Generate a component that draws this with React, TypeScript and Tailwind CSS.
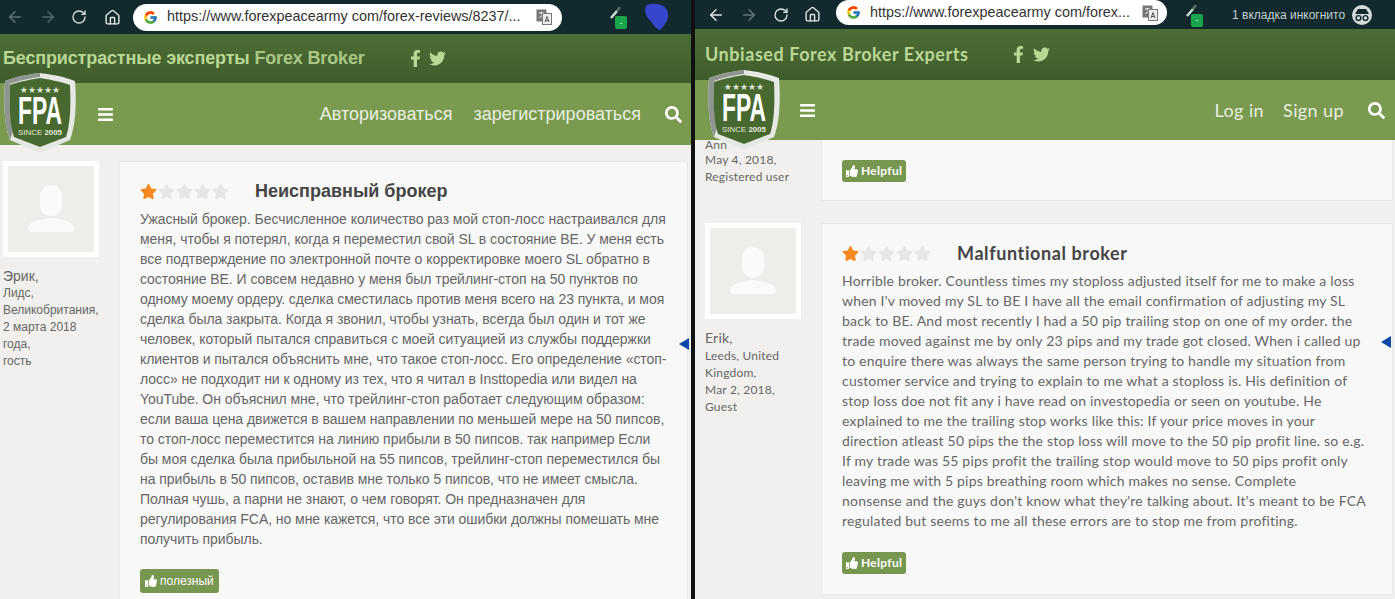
import React from 'react';
import { ArrowLeft, ArrowRight, RotateCw, Home } from 'lucide-react';
import { FaBars, FaFacebookF, FaSearch, FaStar, FaThumbsUp, FaTwitter } from 'react-icons/fa';
import { FcGoogle } from 'react-icons/fc';

const ruLines = [
  'Ужасный брокер. Бесчисленное количество раз мой стоп-лосс настраивался для',
  'меня, чтобы я потерял, когда я переместил свой SL в состояние BE. У меня есть',
  'все подтверждение по электронной почте о корректировке моего SL обратно в',
  'состояние BE. И совсем недавно у меня был трейлинг-стоп на 50 пунктов по',
  'одному моему ордеру. сделка сместилась против меня всего на 23 пункта, и моя',
  'сделка была закрыта. Когда я звонил, чтобы узнать, всегда был один и тот же',
  'человек, который пытался справиться с моей ситуацией из службы поддержки',
  'клиентов и пытался объяснить мне, что такое стоп-лосс. Его определение «стоп-',
  'лосс» не подходит ни к одному из тех, что я читал в Insttopedia или видел на',
  'YouTube. Он объяснил мне, что трейлинг-стоп работает следующим образом:',
  'если ваша цена движется в вашем направлении по меньшей мере на 50 пипсов,',
  'то стоп-лосс переместится на линию прибыли в 50 пипсов. так например Если',
  'бы моя сделка была прибыльной на 55 пипсов, трейлинг-стоп переместился бы',
  'на прибыль в 50 пипсов, оставив мне только 5 пипсов, что не имеет смысла.',
  'Полная чушь, а парни не знают, о чем говорят. Он предназначен для',
  'регулирования FCA, но мне кажется, что все эти ошибки должны помешать мне',
  'получить прибыль.',
];

const enLines = [
  'Horrible broker. Countless times my stoploss adjusted itself for me to make a loss',
  "when I'v moved my SL to BE I have all the email confirmation of adjusting my SL",
  'back to BE. And most recently I had a 50 pip trailing stop on one of my order. the',
  'trade moved against me by only 23 pips and my trade got closed. When i called up',
  'to enquire there was always the same person trying to handle my situation from',
  'customer service and trying to explain to me what a stoploss is. His definition of',
  'stop loss doe not fit any i have read on investopedia or seen on youtube. He',
  'explained to me the trailing stop works like this: If your price moves in your',
  'direction atleast 50 pips the the stop loss will move to the 50 pip profit line. so e.g.',
  'If my trade was 55 pips profit the trailing stop would move to 50 pips profit only',
  'leaving me with 5 pips breathing room which makes no sense. Complete',
  "nonsense and the guys don't know what they're talking about. It's meant to be FCA",
  'regulated but seems to me all these errors are to stop me from profiting.',
];

const Logo = () => (
  <svg viewBox="0 0 74 80" className="w-[74px] h-[80px]">
    <path d="M2 8 C18 2 30 1 37 0 C44 1 56 2 72 8 C74 34 72 54 67 67 L37 80 L7 67 C2 54 0 34 2 8Z" fill="#e6e8e4" />
    <path d="M2 8 C18 2 30 1 37 0 L37 4 C28 5 18 7 7 11 C6 30 7 46 10 58 L7 67 C2 54 0 34 2 8Z" fill="#8f9690" />
    <path d="M7 12 C19 8 30 6 37 5 C44 6 55 8 67 12 C68 35 67 52 63 64 L37 74 L11 64 C7 52 6 35 7 12Z" fill="#47692f" />
    <text x="37" y="20" textAnchor="middle" fill="#dfe6d4" fontSize="9" fontFamily="'DejaVu Sans', sans-serif">★★★★★</text>
    <text x="37" y="51" textAnchor="middle" fill="#ffffff" fontSize="38" fontWeight="700" fontFamily="'Liberation Sans', sans-serif" textLength="44" lengthAdjust="spacingAndGlyphs">FPA</text>
    <text x="37" y="62" textAnchor="middle" fill="#e6ebdd" fontSize="8" fontFamily="'Liberation Sans', sans-serif" textLength="44" lengthAdjust="spacingAndGlyphs">SINCE <tspan fontWeight="700">2005</tspan></text>
  </svg>
);

const Avatar = () => (
  <div className="w-[96px] h-[96px] bg-white p-[5px]">
    <div className="w-full h-full bg-[#eeede9] flex items-center justify-center">
      <svg viewBox="0 0 48 48" className="w-[48px] h-[48px]" fill="#fafaf9">
        <rect x="13" y="0" width="22" height="31" rx="11" />
        <path d="M1 44 C1 36 14 34 24 33 C34 34 47 36 47 44 Q47 47 44 47 L4 47 Q1 47 1 44Z" />
      </svg>
    </div>
  </div>
);

const Stars = () => (
  <div className="flex gap-[1px] text-[17px] text-[#e6e6e4]">
    <FaStar className="text-[#f48a1f]" />
    <FaStar />
    <FaStar />
    <FaStar />
    <FaStar />
  </div>
);

const TranslateIcon = () => (
  <svg viewBox="0 0 16 16" className="w-[16px] h-[16px] ml-auto">
    <rect x="0.5" y="0.5" width="10" height="12" fill="#777" />
    <path d="M3 4 H8 M5.5 3 V5 M3.5 9 L7.5 5" stroke="#fff" strokeWidth="1" fill="none" />
    <rect x="6.5" y="4.5" width="9" height="11" fill="#eee" stroke="#777" />
    <path d="M9 13 L11 7.5 L13 13 M9.8 11.5 H12.2" stroke="#555" strokeWidth="1" fill="none" />
  </svg>
);

const Extension = () => (
  <div className="relative w-[18px] h-[24px]">
    <svg viewBox="0 0 14 18" className="w-[14px] h-[18px]">
      <path d="M2 13 L8 6" stroke="#c9ded0" strokeWidth="2.5" />
      <path d="M8 6 L11 2" stroke="#5b6f66" strokeWidth="2.5" />
    </svg>
    <div className="absolute right-0 bottom-0 w-[12px] h-[13px] bg-[#19a34a] rounded-[2px] text-white text-[8px] leading-[13px] text-center">-</div>
  </div>
);

const ArrowMark = () => (
  <svg viewBox="0 0 12 12" className="w-[12px] h-[12px]" fill="#0d47a8">
    <path d="M0 6 L10 0 L10 12Z" />
  </svg>
);

export default function App() {
  return (
    <div className="flex w-[1395px] h-[599px] overflow-hidden bg-black">
      {/* russian, translated page */}
      <div className="w-[691px] shrink-0 flex flex-col relative font-['Liberation_Sans',sans-serif]">
        <div className="h-[34px] bg-[#122a2d] flex items-center pl-[6px] text-[#8fa3a3]">
          <ArrowLeft className="w-[18px] h-[18px] opacity-60" />
          <ArrowRight className="w-[18px] h-[18px] ml-[15px] opacity-50" />
          <RotateCw className="w-[16px] h-[16px] ml-[14px] text-[#d8dede]" />
          <Home className="w-[17px] h-[17px] ml-[17px] text-[#e3e7e7]" />
          <div className="ml-[12px] w-[429px] h-[27px] bg-white rounded-full flex items-center pl-[10px] pr-[10px]">
            <FcGoogle className="w-[15px] h-[15px]" />
            <span className="ml-[9px] text-[14.4px] text-[#333] whitespace-nowrap">https://www.forexpeacearmy com/forex-reviews/8237/...</span>
            <TranslateIcon />
          </div>
          <div className="ml-[47px]"><Extension /></div>
          <svg viewBox="0 0 26 28" className="ml-[16px] w-[26px] h-[28px]" fill="#3346cc">
            <path d="M4 2 C12 -1 24 1 25 10 C26 16 22 22 17 27 C13 26 10 22 8 18 C3 15 0 6 4 2Z" />
          </svg>
        </div>
        <div className="h-[49px] bg-gradient-to-b from-[#4d6d36] to-[#3f5d2b] flex items-center pl-[3px]">
          <span className="w-[404px] text-[18px] font-bold text-[#b9d795] tracking-[-0.15px] whitespace-nowrap">Беспристрастные эксперты <span className="text-[#a9c785]">Forex Broker</span></span>
          <FaFacebookF className="text-[#b9d795] text-[17px]" />
          <FaTwitter className="ml-[5px] text-[#b9d795] text-[17px]" />
        </div>
        <div className="h-[62px] bg-[#7a9a50] flex items-center pl-[97px] pr-[9px] text-[#e9efe0]">
          <FaBars className="text-[17px] text-white" />
          <span className="ml-auto text-[18px]">Авторизоваться</span>
          <span className="ml-[21px] text-[18px]">зарегистрироваться</span>
          <FaSearch className="ml-[24px] text-[17px] text-white" />
        </div>
        <div className="absolute left-[3px] top-[73px]"><Logo /></div>
        <div className="flex-1 bg-[#f1f0ee] flex pt-[16px] pl-[3px] pr-[3px] gap-[20px] overflow-hidden">
          <div className="w-[96px] shrink-0 text-[#666] text-[12px] leading-[17px]">
            <Avatar />
            <div className="mt-[10px] text-[14px] leading-[18px]">Эрик,</div>
            <div>Лидс,</div>
            <div>Великобритания,</div>
            <div>2 марта 2018</div>
            <div>года,</div>
            <div>гость</div>
          </div>
          <div className="flex-1 h-[480px] bg-[#f8f8f8] border border-[#e8e8e6] pl-[20px] pt-[19px]">
            <div className="flex items-center h-[20px]">
              <Stars />
              <h3 className="ml-[26px] text-[18px] font-bold text-[#444]">Неисправный брокер</h3>
            </div>
            <div className="mt-[8px] text-[14px] leading-[20px] text-[#666] tracking-[-0.05px]">
              {ruLines.map((l) => <div key={l} className="whitespace-nowrap">{l}</div>)}
            </div>
            <button className="mt-[20px] h-[24px] px-[5px] bg-[#77964f] rounded-[3px] text-white text-[12px] flex items-center gap-[3px]">
              <FaThumbsUp className="text-[12px]" />полезный
            </button>
          </div>
        </div>
        <div className="absolute left-[679px] top-[338px]"><ArrowMark /></div>
      </div>
      <div className="w-[4px] shrink-0 bg-[#111]" />
      {/* english page */}
      <div className="flex-1 flex flex-col relative font-['Lato',sans-serif]">
        <div className="h-[29px] bg-[#122a2d] flex items-center pl-[12px] text-[#dfe5e5]">
          <ArrowLeft className="w-[18px] h-[18px]" />
          <ArrowRight className="w-[18px] h-[18px] ml-[15px] opacity-40" />
          <RotateCw className="w-[16px] h-[16px] ml-[15px]" />
          <Home className="w-[17px] h-[17px] ml-[15px]" />
          <div className="ml-[15px] w-[331px] h-[25px] -mt-[4px] bg-white rounded-full flex items-center pl-[10px] pr-[9px] font-['Liberation_Sans',sans-serif]">
            <FcGoogle className="w-[15px] h-[15px]" />
            <span className="ml-[9px] text-[14.4px] text-[#333] whitespace-nowrap">https://www.forexpeacearmy com/forex...</span>
            <TranslateIcon />
          </div>
          <div className="ml-[18px]"><Extension /></div>
          <span className="ml-[29px] text-[12px] text-[#c8d0d0] whitespace-nowrap font-['Liberation_Sans',sans-serif]">1 вкладка инкогнито</span>
          <svg viewBox="0 0 20 20" className="ml-[7px] w-[20px] h-[20px]">
            <circle cx="10" cy="10" r="10" fill="#d4d9d9" />
            <path d="M3 9 H17 L14 4 H6Z" fill="#122a2d" />
            <circle cx="6.5" cy="13" r="2.4" fill="none" stroke="#122a2d" strokeWidth="1.4" />
            <circle cx="13.5" cy="13" r="2.4" fill="none" stroke="#122a2d" strokeWidth="1.4" />
          </svg>
        </div>
        <div className="h-[51px] bg-gradient-to-b from-[#4d6d36] to-[#3f5d2b] flex items-center pl-[10px]">
          <span className="w-[305px] text-[18px] font-bold text-[#b9d795] tracking-[0.55px] whitespace-nowrap">Unbiased Forex Broker Experts</span>
          <FaFacebookF className="text-[#b9d795] text-[17px]" />
          <FaTwitter className="ml-[6px] text-[#b9d795] text-[17px]" />
        </div>
        <div className="h-[60px] bg-[#7a9a50] flex items-center pl-[104px] pr-[10px] text-[#e9efe0]">
          <FaBars className="text-[17px] text-white" />
          <span className="ml-auto text-[18px] tracking-[0.4px]">Log in</span>
          <span className="ml-[19px] text-[18px] tracking-[0.4px]">Sign up</span>
          <FaSearch className="ml-[24px] text-[17px] text-white" />
        </div>
        <div className="absolute left-[12px] top-[70px]"><Logo /></div>
        <div className="flex-1 bg-[#f1f0ee] flex overflow-hidden pl-[10px] pr-[2px] gap-[20px]">
          <div className="w-[96px] shrink-0 text-[#666] text-[12px] leading-[17px] tracking-[0.2px]">
            <div className="h-[10px] leading-[10px] overflow-hidden">Ann</div>
            <div className="mt-[1px]">May 4, 2018,</div>
            <div>Registered user</div>
            <div className="mt-[38px]"><Avatar /></div>
            <div className="mt-[10px] text-[14px] leading-[18px]">Erik,</div>
            <div>Leeds, United</div>
            <div>Kingdom,</div>
            <div>Mar 2, 2018,</div>
            <div>Guest</div>
          </div>
          <div className="flex-1 flex flex-col gap-[22px]">
            <div className="h-[61px] bg-[#f8f8f8] border border-t-0 border-[#e8e8e6] pl-[20px] pt-[20px]">
              <button className="h-[22px] px-[4px] bg-[#77964f] rounded-[3px] text-white text-[12px] font-bold tracking-[0.3px] flex items-center gap-[3px]">
                <FaThumbsUp className="text-[12px]" />Helpful
              </button>
            </div>
            <div className="h-[372px] bg-[#f8f8f8] border border-[#e8e8e6] pl-[20px] pt-[19px]">
              <div className="flex items-center h-[20px]">
                <Stars />
                <h3 className="ml-[26px] text-[18px] font-bold text-[#444] tracking-[0.6px]">Malfuntional broker</h3>
              </div>
              <div className="mt-[8px] text-[14px] leading-[20px] text-[#666] tracking-[0.2px]">
                {enLines.map((l) => <div key={l} className="whitespace-nowrap">{l}</div>)}
              </div>
              <button className="mt-[21px] h-[22px] px-[4px] bg-[#77964f] rounded-[3px] text-white text-[12px] font-bold tracking-[0.3px] flex items-center gap-[3px]">
                <FaThumbsUp className="text-[12px]" />Helpful
              </button>
            </div>
          </div>
        </div>
        <div className="absolute left-[686px] top-[336px]"><ArrowMark /></div>
      </div>
    </div>
  );
}
